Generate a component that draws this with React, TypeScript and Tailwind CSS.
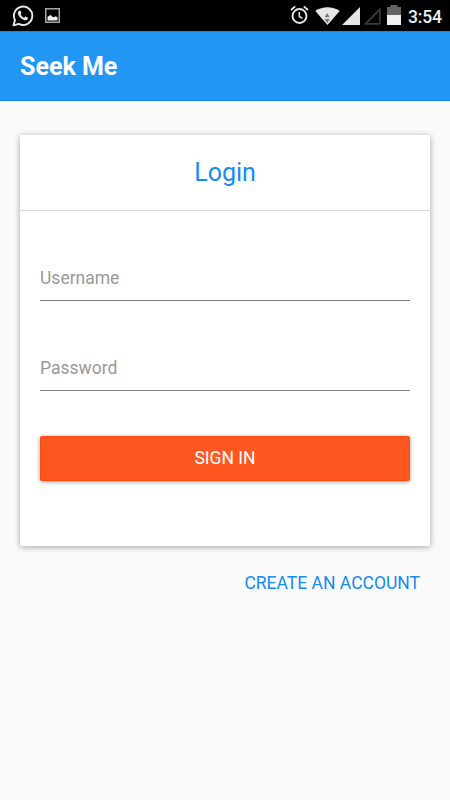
import { useState } from 'react';

const fields = [
  { name: 'username', label: 'Username', type: 'text' },
  { name: 'password', label: 'Password', type: 'password' },
];

function WhatsAppIcon() {
  return (
    <svg className="w-[22px] h-[22px] shrink-0" viewBox="0 0 22 22" fill="none">
      <path
        d="M1.5 20.3l1.5-5.200A9.200 9.200 0 1 1 6.800 18.900z"
        stroke="#e8e8e8"
        strokeWidth="1.9"
        strokeLinejoin="round"
      />
      <path
        d="M7.4 5.6c.5-.2 1 0 1.200.4l.8 2c.1.4-.6 1.1-.8 1.4.8 1.600 2 2.600 3.700 3.300.4-.4.9-1.200 1.300-1.100l2.100 1c.4.3.1 1.500-.4 2-1 .9-2.300.9-3.900.2-2.500-1-4.400-3-5.300-5.200-.6-1.600-.1-3.300 1.300-4z"
        fill="#e8e8e8"
      />
    </svg>
  );
}

function PictureIcon() {
  return (
    <svg className="w-[15px] h-[15px] shrink-0" viewBox="0 0 15 15" fill="none">
      <rect x="0.75" y="0.75" width="13.5" height="13.5" stroke="#a6a6a6" strokeWidth="1.5" />
      <path d="M2.5 12.5V8.800l1.500-.7 1.500-1.300 1.500 1.600 2 .8 1.700-1 1.800 1v3.300z" fill="#f0f0f0" />
    </svg>
  );
}

function AlarmIcon() {
  return (
    <svg className="w-[19px] h-5 shrink-0" viewBox="0 0 19 20" fill="none" stroke="#e6e6e6">
      <circle cx="9.5" cy="11" r="7" strokeWidth="1.9" />
      <path d="M9.3 7v4.500l3.200 1.900" strokeWidth="1.5" />
      <path d="M1 5l4.200-3.600M18 5l-4.200-3.600" strokeWidth="1.9" />
    </svg>
  );
}

function WifiIcon() {
  return (
    <svg className="w-[25px] h-[18px] shrink-0" viewBox="0 0 25 18">
      <path d="M.3 3.900C7.500-1 17.500-1 24.700 3.900L12.500 18z" fill="#e6e6e6" />
      <path d="M9.700 10.200l2.500-4.200 2.500 4.200zM9.700 12h5l-2.500 4.200z" fill="#777" />
    </svg>
  );
}

function BatteryIcon() {
  return (
    <svg className="w-[14px] h-5 shrink-0" viewBox="0 0 14 20">
      <path d="M0 2h3.500V0h7v2H14v8H0z" fill="#646464" />
      <path d="M0 10h14v10H0z" fill="#f0f0f0" />
    </svg>
  );
}

function StatusBar() {
  return (
    <div className="h-[31px] bg-black flex items-start justify-between pl-3 pr-2">
      <div className="flex items-start gap-[11px] pt-[5px]">
        <WhatsAppIcon />
        <div className="pt-[3px]">
          <PictureIcon />
        </div>
      </div>

      <div className="flex items-start pt-[5px]">
        <AlarmIcon />
        <div className="ml-[6px] pt-[2px]">
          <WifiIcon />
        </div>
        <svg className="ml-[2px] mt-[2px] w-[18px] h-[18px]" viewBox="0 0 18 18">
          <path d="M18 0v18H0z" fill="#e6e6e6" />
        </svg>
        <svg className="ml-[3px] mt-[2px] w-[18px] h-[18px]" viewBox="0 0 18 18" fill="none">
          <path d="M16.8 2.500v14.300H2.500z" stroke="#3a3a3a" strokeWidth="1.8" />
        </svg>
        <div className="ml-[6px]">
          <BatteryIcon />
        </div>
        <span className="ml-[7px] mt-[2px] w-[34px] text-[17.5px] leading-5 font-medium tracking-[-0.2px] text-[#f0f0f0]">
          3:54
        </span>
      </div>
    </div>
  );
}

export default function App() {
  const [values, setValues] = useState<Record<string, string>>({});

  return (
    <div className="min-h-screen bg-[#fafafa] font-['Roboto',sans-serif]">
      <StatusBar />

      {/* App bar */}
      <header className="h-[70px] bg-[#2196f3] border-y border-[#0c8cf0] flex items-center px-5 pt-[2px]">
        <h1 className="text-[25px] leading-8 font-bold text-white">Seek Me</h1>
      </header>

      <main className="px-5 pt-[34px]">
        {/* Login card */}
        <section className="h-[411px] bg-white rounded-[2px] shadow-[0_1px_6px_rgba(0,0,0,0.35)]">
          <div className="h-[76px] border-b border-[#d6d6d6] flex items-center justify-center">
            <h2 className="text-[25px] leading-8 text-[#148cf0]">Login</h2>
          </div>

          <form className="px-5 pt-[45px]" onSubmit={(e) => e.preventDefault()}>
            {fields.map((field) => (
              <input
                key={field.name}
                type={field.type}
                placeholder={field.label}
                value={values[field.name] ?? ''}
                onChange={(e) => setValues({ ...values, [field.name]: e.target.value })}
                className="block w-full h-[45px] mb-[45px] border-b border-[#808080] text-[17.5px] text-gray-800 placeholder:text-[#999] outline-none"
              />
            ))}

            <button
              type="submit"
              className="block w-full h-[45px] bg-[#ff5722] border border-[#ff4a10] rounded-[2px] text-[17.5px] text-white shadow-[0_1px_4px_rgba(0,0,0,0.4)]"
            >
              SIGN IN
            </button>
          </form>
        </section>

        <div className="mt-[25px] pr-[10px] flex justify-end">
          <a href="#" className="text-[17.5px] leading-6 text-[#148cf0]">
            CREATE AN ACCOUNT
          </a>
        </div>
      </main>
    </div>
  );
}
